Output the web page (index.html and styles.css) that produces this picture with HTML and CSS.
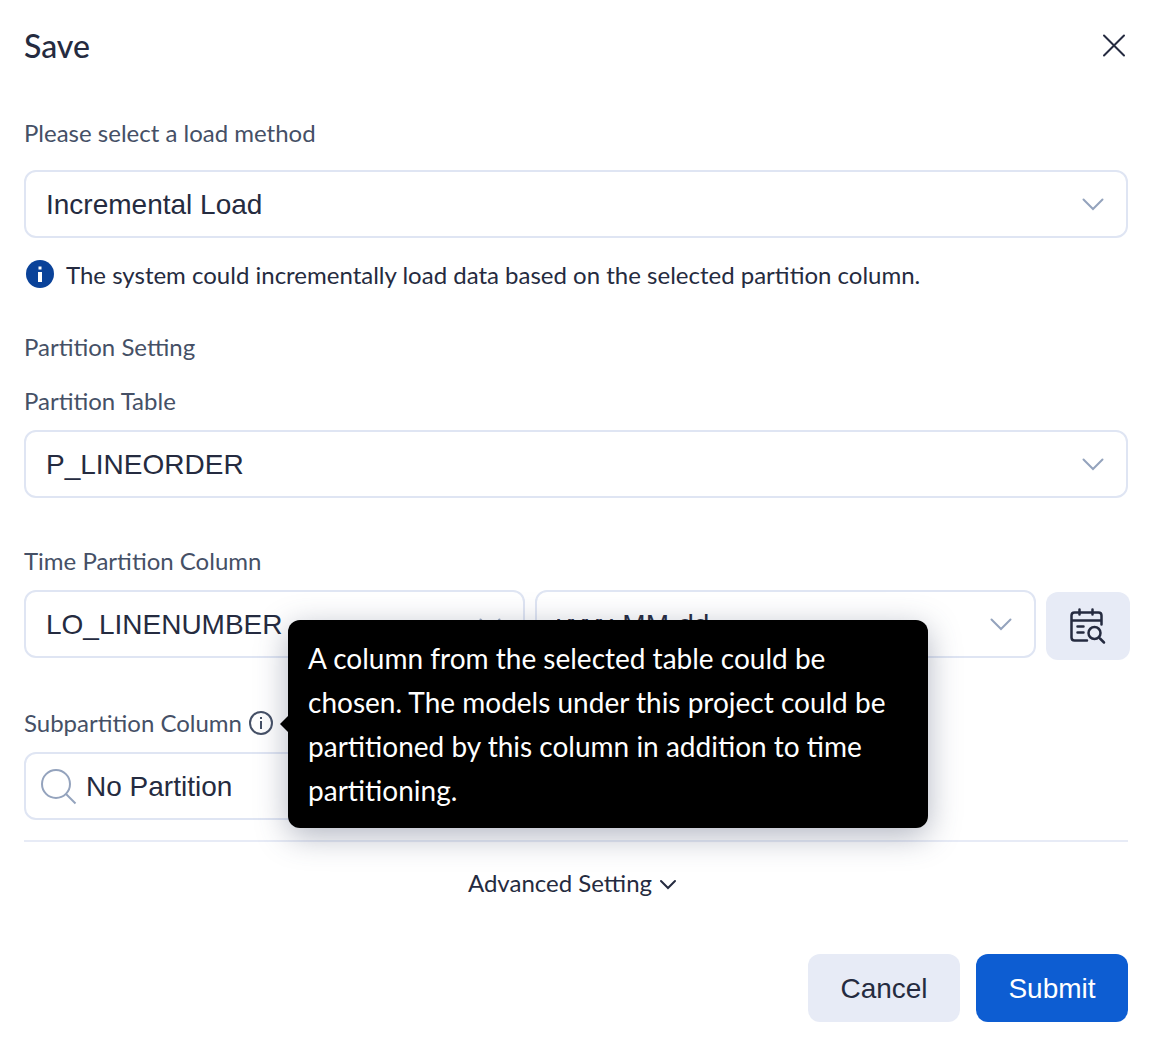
FILE: index.html
```html
<!DOCTYPE html>
<html lang="en">
<head>
<meta charset="utf-8">
<meta name="viewport" content="width=device-width, initial-scale=1">
<title>Save</title>
<link rel="stylesheet" href="styles.css">
</head>
<body>
<form class="dialog" role="dialog" aria-labelledby="dialog-title">
  <header class="dialog-header">
    <h1 class="dialog-title" id="dialog-title">Save</h1>
    <button class="close" type="button" aria-label="Close">
      <svg width="28" height="28" viewBox="0 0 28 28"><path d="M4 3.500L24 23.500M24 3.500L4 23.500"/></svg>
    </button>
  </header>

  <section class="load-method">
    <label class="label" for="method">Please select a load method</label>
    <div class="select">
      <select id="method"><option>Incremental Load</option></select>
      <svg class="chevron" width="22" height="14" viewBox="0 0 22 14"><path d="M1.500 2.500L11 12L20.500 2.500"/></svg>
    </div>
    <p class="hint">
      <svg width="28" height="28" viewBox="0 0 28 28"><circle cx="14" cy="13" r="14" fill="#0a4299"/><path d="M12.500 5.500h3v3h-3zM12 11h4v10h-4z" fill="#fff"/></svg>
      <span>The system could incrementally load data based on the selected partition column.</span>
    </p>
  </section>

  <section class="partition">
    <h2 class="label">Partition Setting</h2>
    <div class="field">
      <label class="label" for="table">Partition Table</label>
      <div class="select">
        <select id="table"><option>P_LINEORDER</option></select>
        <svg class="chevron" width="22" height="14" viewBox="0 0 22 14"><path d="M1.500 2.500L11 12L20.500 2.500"/></svg>
      </div>
    </div>
    <div class="field column-field">
      <label class="label" for="time-column">Time Partition Column</label>
      <div class="columns">
        <div class="select">
          <select id="time-column"><option>LO_LINENUMBER</option></select>
          <svg class="chevron" width="22" height="14" viewBox="0 0 22 14"><path d="M1.500 2.500L11 12L20.500 2.500"/></svg>
        </div>
        <div class="select">
          <select aria-label="Time format"><option>yyyy-MM-dd</option></select>
          <svg class="chevron" width="22" height="14" viewBox="0 0 22 14"><path d="M1.500 2.500L11 12L20.500 2.500"/></svg>
        </div>
        <button class="detect" type="button" aria-label="Detect time format">
          <svg width="40" height="40" viewBox="0 0 40 40"><path d="M19 34.500H6.500Q3.500 34.500 3.500 31.500V9.500Q3.500 6.500 6.500 6.500H30.500Q33.500 6.500 33.500 9.500V18.500M3.500 14.500H33.500M11.500 3.500V8.500M24.500 3.500V8.500M9.500 20.500H15.500M9.500 26.500H15.500"/><circle cx="26.500" cy="27" r="6"/><path d="M32 32.500L36 36.500"/></svg>
        </button>
      </div>
    </div>
    <div class="field column-field">
      <div class="label-row">
        <label class="label" for="sub-column">Subpartition Column</label>
        <span class="info" tabindex="0" aria-describedby="sub-tip">
          <svg width="24" height="24" viewBox="0 0 24 24"><circle cx="12" cy="12" r="11" fill="none" stroke="#455066" stroke-width="2"/><path d="M11 6h2v2h-2zM11 10h2v8h-2z" fill="#455066"/></svg>
          <span class="tooltip" id="sub-tip" role="tooltip">A column from the selected table could be chosen. The models under this project could be partitioned by this column in addition to time partitioning.</span>
        </span>
      </div>
      <div class="columns">
        <div class="search">
          <svg width="36" height="36" viewBox="0 0 36 36"><circle cx="16" cy="16" r="14"/><path d="M26 26L35.500 35.500"/></svg>
          <input id="sub-column" type="text" value="No Partition">
        </div>
      </div>
    </div>
  </section>

  <div class="advanced">
    <button class="advanced-toggle" type="button">Advanced Setting
      <svg width="18" height="12" viewBox="0 0 18 12"><path d="M3 4L10 11L17 4"/></svg>
    </button>
  </div>

  <footer class="actions">
    <button class="btn" type="button">Cancel</button>
    <button class="btn btn-primary" type="submit">Submit</button>
  </footer>
</form>
</body>
</html>
```
FILE: styles.css
```css
* {
  box-sizing: border-box;
}

body {
  margin: 0;
  background: #fff;
  color: #252b40;
  font: 24px/36px Lato, "Liberation Sans", sans-serif;
}

h1, h2, p {
  margin: 0;
}

svg {
  display: block;
  flex: none;
  overflow: visible;
}

button, select, input {
  margin: 0;
  padding: 0;
  border: 0;
  background: none;
  color: inherit;
  font: 28px/32px "Liberation Sans", Arial, sans-serif;
}

button {
  cursor: pointer;
}

.dialog {
  padding: 24px 30px 24px 24px;
}

.dialog-header {
  display: flex;
  align-items: center;
  justify-content: space-between;
  margin-bottom: 47px;
}

.dialog-title {
  font-size: 32px;
  font-weight: 500;
  line-height: 44px;
}

.close svg {
  fill: none;
  stroke: #252b40;
  stroke-width: 2;
  stroke-linecap: round;
}

.label {
  display: block;
  color: #455066;
  font-size: 24px;
  font-weight: 400;
  line-height: 36px;
}

.load-method {
  display: grid;
  gap: 19px;
  margin-bottom: 36px;
}

.hint {
  display: flex;
  align-items: center;
  gap: 12px;
  padding-left: 2px;
}

.partition {
  display: grid;
  gap: 18px;
}

.field {
  display: grid;
  gap: 11px;
}

.column-field {
  margin-top: 27px;
}

.select {
  display: grid;
  align-items: center;
}

.select select,
.select .chevron {
  grid-area: 1 / 1;
}

.select select {
  width: 100%;
  height: 68px;
  padding: 2px 60px 0 20px;
  border: 2px solid #dfe5f3;
  border-radius: 12px;
  background: #fff;
  appearance: none;
}

.chevron {
  justify-self: end;
  margin-right: 24px;
  fill: none;
  stroke: #94a3bd;
  stroke-width: 2;
  stroke-linecap: round;
  pointer-events: none;
}

.columns {
  display: grid;
  grid-template-columns: 1fr 1fr 84px;
  align-items: start;
  gap: 10px;
  margin-right: -2px;
}

.detect {
  display: grid;
  place-items: center;
  height: 68px;
  margin-top: 2px;
  border-radius: 12px;
  background: #e7ebf6;
}

.detect svg {
  fill: none;
  stroke: #252b40;
  stroke-width: 2.5;
  stroke-linecap: round;
  stroke-linejoin: round;
}

.label-row {
  display: flex;
  align-items: center;
  gap: 7px;
}

.info {
  position: relative;
}

.tooltip {
  position: absolute;
  z-index: 1;
  top: 50%;
  left: 100%;
  width: 640px;
  margin: 1px 0 0 15px;
  padding: 16px 20px;
  border-radius: 12px;
  background: #000;
  box-shadow: 0 8px 32px rgba(63, 72, 102, 0.4);
  color: #fff;
  font-size: 28px;
  line-height: 44px;
  transform: translateY(-50%);
}

.tooltip::before {
  content: "";
  position: absolute;
  top: 50%;
  right: 100%;
  border: 8px solid transparent;
  border-left-width: 0;
  border-right-color: #000;
  transform: translateY(-50%);
}

.search {
  display: flex;
  align-items: center;
  gap: 10px;
  height: 68px;
  padding: 0 14px;
  border: 2px solid #dfe5f3;
  border-radius: 12px;
}

.search svg {
  fill: none;
  stroke: #94a3bd;
  stroke-width: 2;
}

.search input {
  flex: 1;
  min-width: 0;
  padding-top: 2px;
}

.advanced {
  display: flex;
  justify-content: center;
  margin-top: 20px;
  padding: 23px 8px 53px 0;
  border-top: 2px solid #e7ebf6;
}

.advanced-toggle {
  display: flex;
  align-items: center;
  gap: 6px;
  font: inherit;
}

.advanced-toggle svg {
  fill: none;
  stroke: #252b40;
  stroke-width: 2;
  stroke-linecap: round;
}

.actions {
  display: flex;
  justify-content: flex-end;
  gap: 16px;
}

.btn {
  width: 152px;
  height: 68px;
  padding-top: 2px;
  border-radius: 12px;
  background: #e7ebf6;
}

.btn-primary {
  background: #0d5dd2;
  color: #fff;
}
```
